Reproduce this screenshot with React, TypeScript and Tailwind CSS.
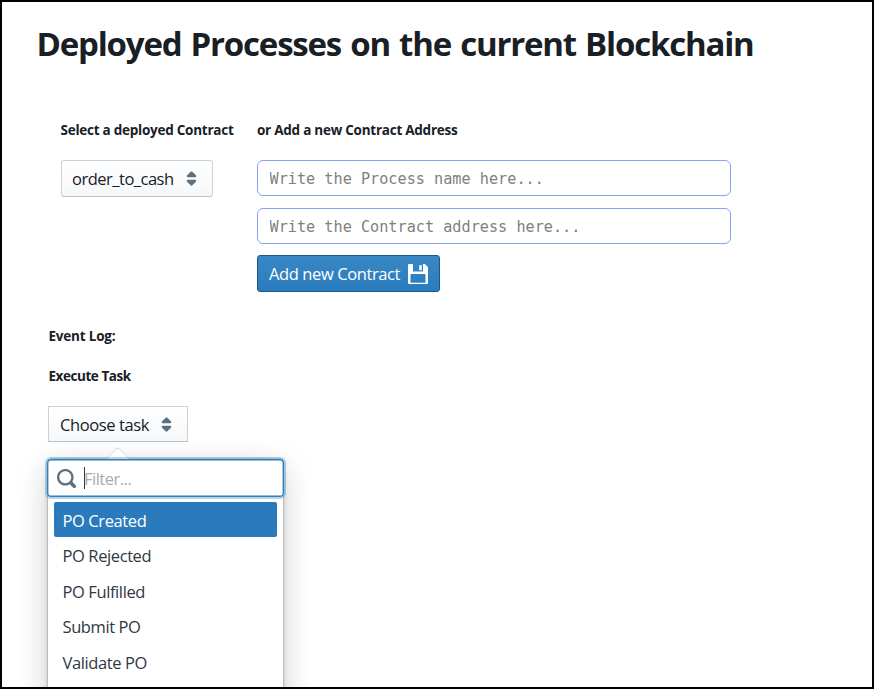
import React from "react";

const CARET =
  "M5 7h6a1.003 1.003 0 00.71-1.71l-3-3C8.53 2.11 8.28 2 8 2s-.53.11-.71.29l-3 3A1.003 1.003 0 005 7zm6 2H5a1.003 1.003 0 00-.71 1.71l3 3c.18.18.43.29.71.29s.53-.11.71-.29l3-3A1.003 1.003 0 0011 9z";
const SEARCH =
  "M15.55 13.43l-2.67-2.68a6.94 6.94 0 001.11-3.76c0-3.87-3.13-7-7-7s-7 3.13-7 7 3.13 7 7 7c1.39 0 2.68-.42 3.76-1.11l2.68 2.67a1.498 1.498 0 102.12-2.12zm-8.56-1.44c-2.76 0-5-2.24-5-5s2.24-5 5-5 5 2.24 5 5-2.24 5-5 5z";
const FLOPPY =
  "M15.71 2.29l-2-2A.997.997 0 0013 0h-1v6H4V0H1C.45 0 0 .45 0 1v14c0 .55.45 1 1 1h14c.55 0 1-.45 1-1V3c0-.28-.11-.53-.29-.71zM14 15H2V9c0-.55.45-1 1-1h10c.55 0 1 .45 1 1v6zM11 1H9v4h2V1z";

function Icon({ d, className }: { d: string; className: string }) {
  return (
    <svg viewBox="0 0 16 16" className={`shrink-0 fill-current ${className}`}>
      <path fillRule="evenodd" d={d} />
    </svg>
  );
}

const field =
  "h-9 w-[474px] rounded-[6px] border border-[#84a5ee] bg-white pt-[2px] pl-[11.5px] font-['DejaVu_Sans_Mono',monospace] text-[15.19px] tracking-normal text-[#182026] placeholder:text-[#808080] outline-none";

const heading = "text-[13.5px] leading-5 font-bold whitespace-nowrap";

const tasks = ["PO Created", "PO Rejected", "PO Fulfilled", "Submit PO", "Validate PO"];

export default function App() {
  return (
    <div className="flex h-[689px] w-[874px] flex-col items-start overflow-hidden border-2 border-black bg-white font-['Open_Sans',sans-serif] text-[16.5px] tracking-[-0.4px] text-[#182026]">
      <h1 className="mt-[18px] ml-[34.5px] h-12 text-[33px] leading-[48px] font-bold tracking-[-1.2px] [word-spacing:1.8px] whitespace-nowrap">
        Deployed Processes on the current Blockchain
      </h1>

      <div className="mt-[50px] ml-[58.5px] flex">
        <section className="w-[196.5px]">
          <h2 className={`h-5 pt-0.5 tracking-[-0.25px] ${heading}`}>Select a deployed Contract</h2>
          <button className="mt-[22px] flex h-[37px] w-[152px] items-center justify-between rounded-[3px] border border-[#cdd1d5] border-b-[#bcc1c6] bg-linear-to-b from-white to-[#f5f8fa] pr-[11px] pl-[10.5px]">
            <span className="pt-0.5 tracking-[-0.5px] whitespace-nowrap">order_to_cash</span>
            <Icon d={CARET} className="size-[19px] text-[#5c7080]" />
          </button>
        </section>
        <section>
          <h2 className={`h-5 pt-0.5 tracking-[-0.25px] ${heading}`}>or Add a new Contract Address</h2>
          <div className="mt-[22px] flex flex-col items-start gap-3">
            <input className={field} placeholder="Write the Process name here..." />
            <input className={field} placeholder="Write the Contract address here..." />
            <button className="-mt-px flex h-[37px] w-[183px] items-center justify-between rounded-[3px] border border-[#1c5785] bg-linear-to-b from-[#3988c5] to-[#2a7cbd] pr-[11px] pl-[11px] text-white">
              <span className="pt-px whitespace-nowrap">Add new Contract</span>
              <Icon d={FLOPPY} className="size-5 text-white" />
            </button>
          </div>
        </section>
      </div>

      <div className="mt-[34px] ml-[46.5px]">
        <h2 className={`h-5 tracking-[-0.2px] ${heading}`}>Event Log:</h2>
        <h2 className={`mt-5 h-5 tracking-[-0.45px] ${heading}`}>Execute Task</h2>
      </div>

      <div className="mt-[20px] ml-[46px]">
        <button className="flex h-9 w-[140px] items-center justify-between border border-[#cdd1d5] border-b-[#bcc1c6] bg-linear-to-b from-white to-[#f5f8fa] px-[11px]">
          <span className="pt-0.5 whitespace-nowrap">Choose task</span>
          <Icon d={CARET} className="size-[19px] text-[#5c7080]" />
        </button>

        <div className="relative mt-[17px] h-[300px] w-[235px] rounded-[4px] bg-white shadow-[0_0_0_1px_rgba(16,22,26,0.12),0_2px_5px_rgba(16,22,26,0.2),0_9px_30px_rgba(16,22,26,0.22)]">
          <svg viewBox="0 0 24 13" className="absolute top-[-12px] left-[58px] h-[13px] w-6">
            <path d="M0 13 L10 2 Q12 0 14 2 L24 13Z" fill="white" />
            <path d="M0 12.5 L10 2 Q12 0 14 2 L24 12.5" fill="none" stroke="#d3d6d8" strokeWidth="1" />
          </svg>
          <div className="relative -mx-px flex h-[38px] items-center rounded-[4px] bg-white pl-[10px] shadow-[inset_0_0_0_1.4px_#2e80bd,0_0_0_2px_rgba(46,128,189,0.35)]">
            <Icon d={SEARCH} className="size-[19px] text-[#5c7080]" />
            <div className="ml-[8px] h-[22px] w-px bg-[#30383e]" />
            <span className="-ml-px pt-0.5 tracking-[-0.5px] text-[#a5acb2]">Filter...</span>
          </div>
          <ul className="flex flex-col gap-[0.5px] px-[6px] pt-[5px] text-[#30383f]">
            {tasks.map((task, i) => (
              <li
                key={task}
                className={`flex h-[35px] items-center rounded-[2px] pt-[3px] pl-[8.5px] ${i === 0 ? "bg-[#2a7abc] text-white" : ""}`}
              >
                {task}
              </li>
            ))}
          </ul>
        </div>
      </div>
    </div>
  );
}
